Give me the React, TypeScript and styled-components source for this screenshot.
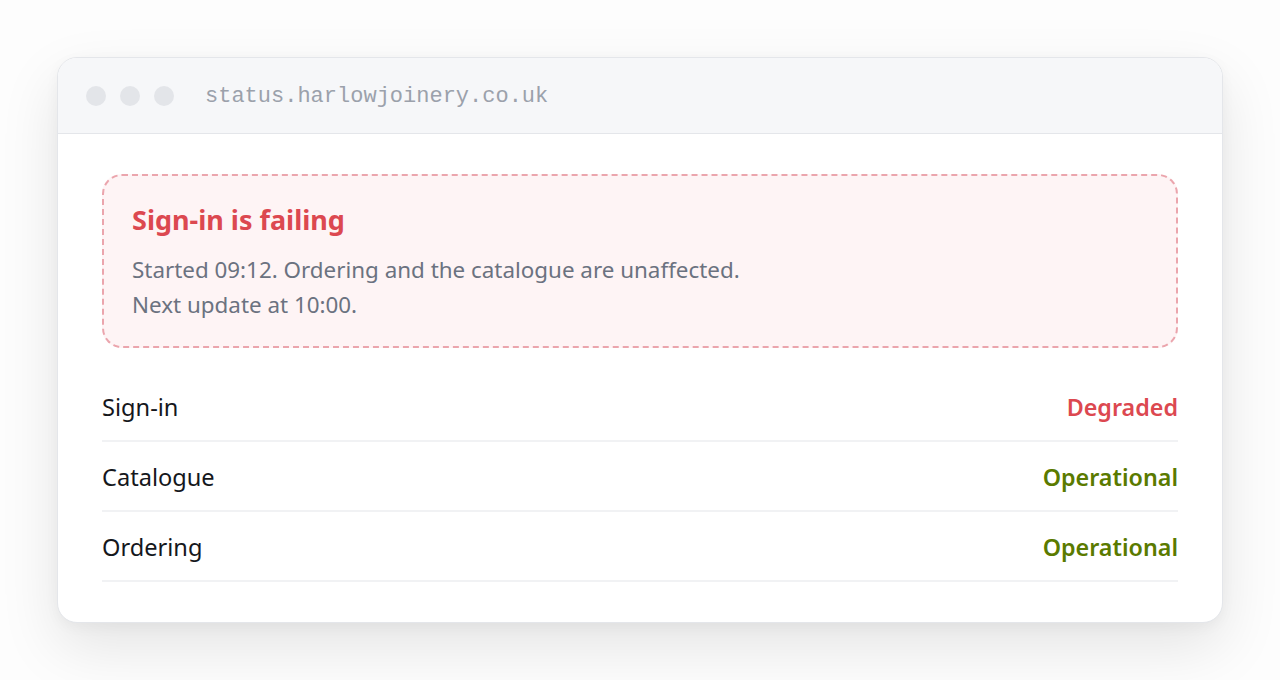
import React from "react";
import styled, { createGlobalStyle } from "styled-components";

const Global = createGlobalStyle`
  html, body { margin: 0; padding: 0; background: #ffffff; }
  body { font-family: "Noto Sans", "Open Sans", sans-serif; }
  * { box-sizing: border-box; }
`;

const Page = styled.div`
  width: 1280px;
  height: 680px;
  padding: 57px 57px;
  background: #fdfdfd;
`;

const Window = styled.div`
  background: #ffffff;
  border: 1px solid #e4e6ea;
  border-radius: 20px;
  overflow: hidden;
  box-shadow: 0 24px 60px rgba(0, 0, 0, 0.1), 0 4px 14px rgba(0, 0, 0, 0.04);
`;

const TitleBar = styled.div`
  height: 76px;
  display: flex;
  align-items: center;
  padding: 0 28px;
  background: #f6f7f9;
  border-bottom: 1px solid #e4e6ea;
`;

const Dots = styled.div`
  display: flex;
  gap: 14px;
  margin-right: 31px;
`;

const Dot = styled.span`
  width: 20px;
  height: 20px;
  border-radius: 50%;
  background: #e3e5e9;
`;

const Url = styled.span`
  font-family: "Liberation Mono", "DejaVu Sans Mono", monospace;
  font-size: 22px;
  color: #9ba1ab;
  margin-top: 1px;
`;

const Body = styled.div`
  padding: 40px 44px 40px;
`;

const Alert = styled.div`
  border: 2px dashed #eba5ad;
  border-radius: 20px;
  background: #fef4f5;
  padding: 26px 28px 24px;
`;

const AlertTitle = styled.h2`
  margin: 0 0 14px;
  font-size: 27px;
  line-height: 36px;
  font-weight: 700;
  color: #dc4850;
`;

const AlertText = styled.p`
  margin: 0;
  font-size: 22.4px;
  line-height: 35px;
  color: #6b7280;
`;

const List = styled.div`
  margin-top: 24px;
  display: flex;
  flex-direction: column;
`;

const Row = styled.div`
  height: 70px;
  display: flex;
  align-items: center;
  justify-content: space-between;
  border-bottom: 2px solid #f1f2f4;
  padding-top: 2px;
`;

const Name = styled.span`
  font-size: 23.6px;
  color: #15171c;
`;

const Status = styled.span<{ $tone: "bad" | "ok" }>`
  font-size: 23.3px;
  font-weight: 600;
  color: ${(p) => (p.$tone === "bad" ? "#dc4850" : "#5a7a00")};
`;

const services: { name: string; status: string; tone: "bad" | "ok" }[] = [
  { name: "Sign-in", status: "Degraded", tone: "bad" },
  { name: "Catalogue", status: "Operational", tone: "ok" },
  { name: "Ordering", status: "Operational", tone: "ok" },
];

export default function App() {
  return (
    <>
      <Global />
      <Page>
        <Window>
          <TitleBar>
            <Dots>
              <Dot />
              <Dot />
              <Dot />
            </Dots>
            <Url>status.harlowjoinery.co.uk</Url>
          </TitleBar>
          <Body>
            <Alert>
              <AlertTitle>Sign-in is failing</AlertTitle>
              <AlertText>
                Started 09:12. Ordering and the catalogue are unaffected.
                <br />
                Next update at 10:00.
              </AlertText>
            </Alert>
            <List>
              {services.map((s) => (
                <Row key={s.name}>
                  <Name>{s.name}</Name>
                  <Status $tone={s.tone}>{s.status}</Status>
                </Row>
              ))}
            </List>
          </Body>
        </Window>
      </Page>
    </>
  );
}
